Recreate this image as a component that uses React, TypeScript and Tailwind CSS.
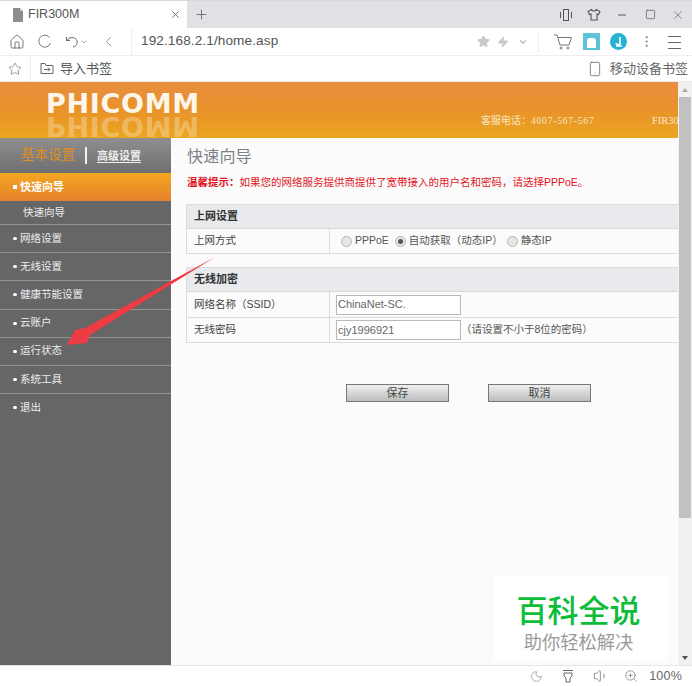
import { ChevronDown, ChevronLeft, EllipsisVertical, Home, Minus, Moon, Plus, Smartphone, Square, Star, Volume1, X, Zap, ZoomIn } from 'lucide-react';

const cjk = "font-['Liberation_Sans','Noto_Sans_CJK_SC',sans-serif]";

const menuItems = ['网络设置', '无线设置', '健康节能设置', '云账户', '运行状态', '系统工具', '退出'];

function FileIcon() {
  return (
    <svg width="12" height="14" viewBox="0 0 12 14" className="shrink-0">
      <path d="M1 0h7l3 3v11H1z" fill="#8d8d8d" />
      <path d="M8 0l3 3H8z" fill="#cfcfcf" />
    </svg>
  );
}

function CartIcon() {
  return (
    <svg width="20" height="18" viewBox="0 0 20 18" fill="none" stroke="#777" strokeWidth="1">
      <path d="M1 2h3l3 10h9l2.500-7.500H5" />
      <circle cx="8" cy="15" r="1" />
      <circle cx="15" cy="15" r="1" />
    </svg>
  );
}

function BookmarkImportIcon() {
  return (
    <svg width="14" height="13" viewBox="0 0 14 13" fill="none" stroke="#666" strokeWidth="1">
      <path d="M1 11.500V1.500h4l1 2h7v8z" />
      <path d="M4 7.500h6M8 5.500l2 2-2 2" />
    </svg>
  );
}

function ThemeShirtIcon() {
  return (
    <svg width="14" height="14" viewBox="0 0 14 14" fill="none" stroke="#555" strokeWidth="1.100">
      <path d="M4.500 1.500 1 3.500 2.500 6.500 4 6v6h6V6l1.500.5L13 3.500 9.500 1.500C9 3.500 5 3.500 4.500 1.500z" />
    </svg>
  );
}

function VibrateIcon() {
  return (
    <svg width="14" height="14" viewBox="0 0 14 14" fill="none" stroke="#555" strokeWidth="1">
      <rect x="4.500" y="1.500" width="5" height="11" />
      <path d="M1.500 4v6M12.500 4v6" />
    </svg>
  );
}

function LampIcon() {
  return (
    <svg width="14" height="15" viewBox="0 0 14 15" fill="none" stroke="#666" strokeWidth="1">
      <path d="M2 1.500h10M3 4h8v3l-2 2v4H5V9L3 7z" />
    </svg>
  );
}

function Radio({ checked }: { checked?: boolean }) {
  return (
    <span className="w-[11px] h-[11px] rounded-full border border-[#b5b5b5] bg-[#e6e6e6] flex items-center justify-center shrink-0">
      {checked && <span className="w-[5px] h-[5px] rounded-full bg-[#555]" />}
    </span>
  );
}

function SectionRow({ title }: { title: string }) {
  return (
    <div className="h-[24px] bg-[#e9eaed] border-b border-[#d8d8d8] pl-[7px] flex items-center text-[11px] font-bold text-[#333]">
      {title}
    </div>
  );
}

function FormRow({ label, children, h }: { label: string; children: React.ReactNode; h: string }) {
  return (
    <div className={`flex border-b border-[#dcdcdc] ${h}`}>
      <div className="w-[143px] pl-[7px] flex items-center border-r border-[#dcdcdc] text-[10.500px] text-[#444]">{label}</div>
      <div className="flex-1 pl-[6px] flex items-center text-[10.500px] text-[#555]">{children}</div>
    </div>
  );
}

function TextBox({ value }: { value: string }) {
  return (
    <div className="w-[125px] h-[20px] border border-[#b9b9b9] bg-white pl-[1px] flex items-center text-[11px] text-[#666]">
      {value}
    </div>
  );
}

function FormButton({ label }: { label: string }) {
  return (
    <div className="w-[103px] h-[18px] border border-[#777] bg-gradient-to-b from-[#f0f0f0] to-[#bdbdbd] flex items-center justify-center text-[11px] text-[#444]">
      {label}
    </div>
  );
}

export default function App() {
  return (
    <div className={`relative w-[692px] h-[686px] overflow-hidden bg-white flex flex-col ${cjk}`}>
      {/* Tab strip */}
      <div className="h-[28px] flex bg-[#dfe1e5] border-t border-[#d8d8d8] shrink-0">
        <div className="w-[187px] bg-white flex items-center pl-[12px] pr-[6px] gap-[4px] text-[12.500px] text-[#555]">
          <FileIcon />
          <span className="flex-1">FIR300M</span>
          <X size={11} color="#666" />
        </div>
        <div className="w-[28px] flex items-center justify-center">
          <Plus size={15} color="#555" strokeWidth={1.2} />
        </div>
        <div className="flex-1 flex items-center justify-end">
          <div className="w-[28px] flex justify-center"><VibrateIcon /></div>
          <div className="w-[28px] flex justify-center"><ThemeShirtIcon /></div>
          <div className="w-[28px] flex justify-center"><Minus size={12} color="#555" /></div>
          <div className="w-[28px] flex justify-center"><Square size={11} color="#555" strokeWidth={1.5} /></div>
          <div className="w-[28px] flex justify-center"><X size={14} color="#666" strokeWidth={1.2} /></div>
        </div>
      </div>

      {/* Address bar */}
      <div className="h-[28px] flex items-center bg-white border-b border-[#eee] shrink-0">
        <div className="w-[132px] flex items-center pl-[9px] gap-[12px] border-r border-[#eee] h-full">
          <Home size={16} color="#555" strokeWidth={1.2} />
          <svg width="15" height="15" viewBox="0 0 15 15" fill="none" stroke="#777" strokeWidth="1">
            <path d="M12.500 3.500A6 6 0 1 0 13.500 9" />
          </svg>
          <div className="flex items-center ml-[1px]">
            <svg width="15" height="14" viewBox="0 0 15 14" fill="none" stroke="#666" strokeWidth="1">
              <path d="M1.500 2v3.500H5M2 5.500C4 2 8 2 10.500 3.500 13.500 6 12.500 11 8 12" />
            </svg>
            <ChevronDown size={8} color="#777" />
          </div>
          <ChevronLeft size={17} color="#777" strokeWidth={1.1} />
        </div>
        <span className="pl-[9px] flex-1 text-[13.600px] text-[#555] tracking-[0.1px]">192.168.2.1/home.asp</span>
        <div className="flex items-center h-full pr-[4px]">
          <div className="w-[20px] flex justify-center"><Star size={13} fill="#c9c9c9" color="#c9c9c9" /></div>
          <div className="w-[20px] flex justify-center"><Zap size={12} fill="#c9c9c9" color="#c9c9c9" /></div>
          <div className="w-[20px] flex justify-center"><ChevronDown size={10} color="#bbb" strokeWidth={3} /></div>
          <div className="w-px h-[20px] bg-[#eee] ml-[5px] mr-[10px]" />
          <div className="w-[28px] flex justify-center"><CartIcon /></div>
          <div className="w-[28px] flex justify-center">
            <div className="w-[17px] h-[17px] bg-[#5cc3d8] flex items-center justify-center">
              <div className="w-[9px] h-[10px] bg-white rounded-t-[3px] mt-[3px]" />
            </div>
          </div>
          <div className="w-[27px] flex justify-center">
            <div className="w-[17px] h-[17px] rounded-full bg-[#24b3d3] flex items-center justify-center">
              <svg width="10" height="11" viewBox="0 0 10 11" fill="none" stroke="#fff" strokeWidth="1.600">
                <path d="M6 1v5.500A2 2 0 0 1 2 7M2 10h6" />
              </svg>
            </div>
          </div>
          <div className="w-[28px] flex justify-center"><EllipsisVertical size={15} color="#666" strokeWidth={1.2} /></div>
          <div className="w-[28px] flex justify-center">
            <svg width="13" height="14" viewBox="0 0 13 14" stroke="#666" strokeWidth="1">
              <path d="M0 1.500h13M0 7.500h13M0 13.500h13" />
            </svg>
          </div>
        </div>
      </div>

      {/* Bookmarks bar */}
      <div className="h-[26px] flex items-center bg-white shrink-0 border-b border-[#e8e8e8] text-[13px] text-[#555]">
        <div className="w-[31px] h-full border-r border-[#eee] flex items-center justify-center">
          <Star size={14} color="#666" strokeWidth={1.1} />
        </div>
        <div className="pl-[9px] flex-1 flex items-center gap-[6px]">
          <BookmarkImportIcon />
          <span>导入书签</span>
        </div>
        <div className="flex items-center gap-[7px] pr-[4px]">
          <Smartphone size={16} color="#555" strokeWidth={1.1} />
          <span className="text-[#666]">移动设备书签</span>
        </div>
      </div>

      {/* Page */}
      <div className="flex-1 flex min-h-0">
        <div className="flex-1 min-w-0 flex flex-col overflow-hidden">
          {/* Router header */}
          <div className="h-[56px] shrink-0 bg-gradient-to-b from-[#e88d3f] via-[#e8932a] to-[#eba51f] flex">
            <div className="pl-[46px] w-[481px] pt-[11px] overflow-hidden">
              <div className="text-[27px] leading-[22px] text-[#fff6ea] font-bold font-['DejaVu_Sans',sans-serif] tracking-[0.7px]">PHICOMM</div>
              <div className="text-[27px] leading-[22px] text-[#fff6ea] opacity-30 font-bold font-['DejaVu_Sans',sans-serif] tracking-[0.7px] scale-y-[-1]">PHICOMM</div>
            </div>
            <div className="pt-[31px] flex text-[10px] text-[#f9e7c6] whitespace-nowrap">
              <span className="w-[171px]">客服电话：<span className="font-['Liberation_Serif',serif] text-[9.500px] tracking-[0.8px]">4007-567-567</span></span>
              <span className="font-['Liberation_Serif',serif] text-[10.500px] w-[26px] overflow-hidden">FIR300M</span>
            </div>
          </div>

          <div className="flex-1 flex min-h-0">
            {/* Sidebar */}
            <div className="w-[171px] shrink-0 bg-[#666] flex flex-col">
              <div className="h-[35px] bg-gradient-to-b from-[#8f8f8f] to-[#6f6f6f] flex items-center pl-[21px]">
                <span className="text-[13.500px] text-[#e08f22]">基本设置</span>
                <div className="w-[2px] h-[17px] bg-[#f0f0f0] ml-[10px] mr-[10px]" />
                <span className="text-[11px] font-bold text-[#eee] underline underline-offset-2 mt-[2px]">高级设置</span>
              </div>
              <div className="h-[28px] bg-gradient-to-b from-[#f2a71e] to-[#e5812c] flex items-center pl-[13px] text-[11px] font-bold text-white">
                <span className="w-[4px] h-[4px] bg-white mr-[3px]" />
                快速向导
              </div>
              <div className="h-[23px] flex items-center pl-[23px] text-[10.500px] text-[#eee]">快速向导</div>
              {menuItems.map((item) => (
                <div key={item} className="h-[28.200px] border-t border-[#949494] flex items-center pl-[13px] text-[10.500px] text-[#eee]">
                  <span className="w-[4px] h-[3px] rounded-full bg-white mr-[3px]" />
                  {item}
                </div>
              ))}
            </div>

            {/* Wizard content */}
            <div className="flex-1 min-w-0 bg-[#fbfbfb] pl-[15px]">
              <h1 className="pt-[8px] pl-[1px] text-[16px] leading-[22px] text-[#7b8088] tracking-[0.2px]">快速向导</h1>
              <p className="mt-[7px] pl-[1px] text-[10.500px] leading-[14px] text-[#e2141e] whitespace-nowrap">
                <span className="font-bold">温馨提示：</span>如果您的网络服务提供商提供了宽带接入的用户名和密码，请选择PPPoE。
              </p>

              <div className="mt-[15px] border-l border-t border-[#dcdcdc]">
                <SectionRow title="上网设置" />
                <FormRow label="上网方式" h="h-[25px]">
                  <div className="pl-[5px] flex items-center">
                    <Radio />
                    <span className="ml-[3px]">PPPoE</span>
                    <span className="ml-[6px]"><Radio checked /></span>
                    <span className="ml-[3px]">自动获取（动态IP）</span>
                    <span className="ml-[4px]"><Radio /></span>
                    <span className="ml-[3px]">静态IP</span>
                  </div>
                </FormRow>
              </div>

              <div className="mt-[13px] border-l border-t border-[#dcdcdc]">
                <SectionRow title="无线加密" />
                <FormRow label="网络名称（SSID）" h="h-[26px]">
                  <TextBox value="ChinaNet-SC." />
                </FormRow>
                <FormRow label="无线密码" h="h-[25px]">
                  <TextBox value="cjy1996921" />
                  <span>（请设置不小于8位的密码）</span>
                </FormRow>
              </div>

              <div className="mt-[41px] pl-[160px] flex gap-[39px]">
                <FormButton label="保存" />
                <FormButton label="取消" />
              </div>
            </div>
          </div>
        </div>

        {/* Scrollbar */}
        <div className="w-[14px] shrink-0 bg-[#f1f1f1] flex flex-col items-center">
          <div className="h-[15px] flex items-center">
            <div className="w-0 h-0 border-x-[3.500px] border-x-transparent border-b-[4px] border-b-[#aaa]" />
          </div>
          <div className="w-[12px] h-[421px] bg-[#c1c1c1]" />
          <div className="flex-1" />
          <div className="h-[15px] flex items-center">
            <div className="w-0 h-0 border-x-[3.500px] border-x-transparent border-t-[4px] border-t-[#555]" />
          </div>
        </div>
      </div>

      {/* Status bar */}
      <div className="h-[21px] shrink-0 bg-white border-t border-[#e6e6e6] flex items-center justify-end pr-[10px] text-[12.500px] text-[#666]">
        <Moon size={13} color="#777" strokeWidth={1.1} />
        <div className="ml-[18px]"><LampIcon /></div>
        <Volume1 size={16} color="#666" strokeWidth={1.1} className="ml-[18px]" />
        <ZoomIn size={14} color="#666" strokeWidth={1.1} className="ml-[15px]" />
        <span className="ml-[11px] tracking-[0.2px]">100%</span>
      </div>

      {/* Annotation arrow over the page */}
      <svg width="190" height="110" viewBox="0 0 190 110" className="absolute left-[35px] top-[250px]">
        <path d="M180 7 50 78 40 80 32 95 52 93 55 85z" fill="#ef3b44" />
      </svg>

      {/* Watermark over the page */}
      <div className="absolute left-[494px] top-[577px] w-[173px] h-[84px] bg-white flex flex-col items-center pt-[14px] pr-[4px] font-['Noto_Sans_CJK_SC',sans-serif]">
        <span className="text-[31px] leading-[36px] font-medium text-[#0dbd3a]">百科全说</span>
        <span className="text-[18.300px] leading-[22px] text-[#9a9a9a] mt-[3px]">助你轻松解决</span>
      </div>
    </div>
  );
}
